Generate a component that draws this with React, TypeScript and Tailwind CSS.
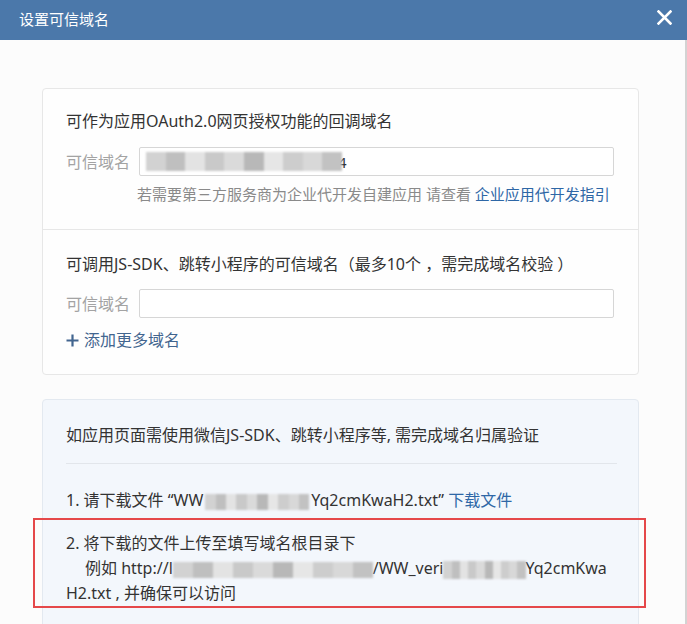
import React from "react";

const FONT = "font-['Noto_Sans','Noto_Sans_CJK_SC',sans-serif]";

const shades = [
  "bg-[#d2d2d2]",
  "bg-[#bfbfbf]",
  "bg-[#e3e3e3]",
  "bg-[#c9c9c9]",
  "bg-[#dadada]",
  "bg-[#b8b8b8]",
  "bg-[#e6e6e6]",
  "bg-[#cdcdcd]",
  "bg-[#d8d8d8]",
  "bg-[#c2c2c2]",
];

// redacted part of the original screenshot
function Mosaic({ className }: { className: string }) {
  return (
    <span className={`inline-flex align-middle blur-[1.2px] ${className}`}>
      {shades.map((s, i) => (
        <span key={i} className={`flex-1 ${s}`} />
      ))}
    </span>
  );
}

function CloseIcon() {
  return (
    <svg width="15" height="15" viewBox="0 0 15 15" fill="none">
      <path d="M1.5 1.5 L13.5 13.5 M13.5 1.5 L1.5 13.5" stroke="#fff" strokeWidth="2.6" strokeLinecap="square" />
    </svg>
  );
}

function PlusIcon() {
  return (
    <svg width="13" height="13" viewBox="0 0 13 13" fill="none">
      <path d="M6.5 0.5 V12.5 M0.5 6.5 H12.5" stroke="#42658f" strokeWidth="2.2" />
    </svg>
  );
}

function DomainRow({ children }: { children?: React.ReactNode }) {
  return (
    <div className="flex items-center">
      <span className="w-[64px] text-[16px] text-[#a3a3a3] leading-[24px] whitespace-nowrap">可信域名</span>
      <div className="ml-[9px] flex-1 h-[29px] bg-white border border-[#d6d6d6] rounded-[2px] flex items-center pl-[6px] text-[15px] text-[#333]">
        {children}
      </div>
    </div>
  );
}

export default function App() {
  return (
    <div className={`w-[687px] h-[624px] overflow-hidden bg-[#fcfcfc] ${FONT}`}>
      {/* Title bar */}
      <div className="h-[40px] bg-[#4b78aa] flex items-center justify-between pl-[19px] pr-[15px]">
        <span className="text-white text-[15px] leading-[20px] -mt-[3px]">设置可信域名</span>
        <button className="-mt-[6px]">
          <CloseIcon />
        </button>
      </div>

      <div className="h-[584px] border-r-2 border-[#d3d3d3] pl-[42px] pr-[46px] pt-[48px]">
        {/* Domain settings */}
        <div className="bg-[#fefefe] border border-[#e7e7e7] rounded-[4px]">
          <div className="pl-[23px] pr-[24px] pt-[20px] pb-[24px] border-b border-[#e7e7e7]">
            <div className="text-[16px] leading-[24px] text-[#333]">可作为应用OAuth2.0网页授权功能的回调域名</div>
            <div className="mt-[14px]">
              <DomainRow>
                <Mosaic className="w-[196px] h-[19px]" />
                <span className="-ml-[4px] leading-[18px]">4</span>
              </DomainRow>
            </div>
            <div className="mt-[7px] ml-[71px] text-[15px] leading-[22px] text-[#8a8a8a] whitespace-nowrap">
              若需要第三方服务商为企业代开发自建应用 请查看 <span className="text-[#2e67a6]">企业应用代开发指引</span>
            </div>
          </div>
          <div className="pl-[23px] pr-[24px] pt-[22px] pb-[22px]">
            <div className="text-[16px] leading-[24px] text-[#333] whitespace-nowrap">
              可调用JS-SDK、跳转小程序的可信域名（最多10个 ，需完成域名校验 ）
            </div>
            <div className="mt-[13px]">
              <DomainRow />
            </div>
            <div className="mt-[10px] flex items-center gap-[5px] text-[16px] leading-[24px] text-[#42658f]">
              <PlusIcon />
              <span>添加更多域名</span>
            </div>
          </div>
        </div>

        {/* Domain verification */}
        <div className="mt-[24px] bg-[#f3f7fc] border border-[#e3e9f0] rounded-[4px] pl-[23px] pr-[21px] pt-[23px] h-[240px]">
          <div className="text-[16px] leading-[24px] text-[#333] whitespace-nowrap">
            如应用页面需使用微信JS-SDK、跳转小程序等, 需完成域名归属验证
          </div>
          <div className="mt-[16px] border-t border-[#e2e6eb]" />
          <div className="mt-[24px] text-[16px] leading-[24px] text-[#333] whitespace-nowrap">
            1. 请下载文件 “WW<Mosaic className="w-[104px] h-[16px] mx-[2px]" />Yq2cmKwaH2.txt”{" "}
            <span className="text-[#2e67a6]">下载文件</span>
          </div>
          <div className="mt-[6px] -ml-[33px] -mr-[29px] border-2 border-[#e5484a] pl-[31px] pr-[27px] pt-[11px] text-[16px] leading-[25px] text-[#333] whitespace-nowrap">
            <div>2. 将下载的文件上传至填写域名根目录下</div>
            <div className="pl-[19px]">
              例如 http://l<Mosaic className="w-[200px] h-[16px]" />/WW_veri
              <Mosaic className="w-[82px] h-[18px]" />Yq2cmKwa
            </div>
            <div>H2.txt , 并确保可以访问</div>
          </div>
        </div>
      </div>
    </div>
  );
}
